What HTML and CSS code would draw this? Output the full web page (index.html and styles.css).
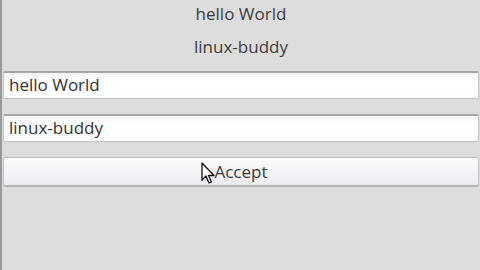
FILE: index.html
```html
<!DOCTYPE html>
<html>
<head>
<meta charset="utf-8">
<link rel="stylesheet" href="styles.css">
</head>
<body>
<div class="window">
  <div class="label first">hello World</div>
  <div class="label second">linux-buddy</div>
  <div class="entry">hello World</div>
  <div class="entry">linux-buddy</div>
  <div class="button">Accept</div>
  <svg class="cursor" width="14" height="24" viewBox="0 0 14 24">
    <path d="M1 1 L1 18 L5 14 L8 21 L10.5 20 L7.5 13.5 L13 13.5 Z" fill="#fff" stroke="#111" stroke-width="1.3" stroke-linejoin="round"/>
  </svg>
</div>
</body>
</html>
```
FILE: styles.css
```css
html, body {
  margin: 0;
  padding: 0;
  width: 480px;
  height: 270px;
  overflow: hidden;
  background: #dcdcdc;
}
.window {
  position: relative;
  box-sizing: border-box;
  height: 270px;
  border-left: 2px solid #9a9a9a;
  padding: 0 1px 0 1px;
  display: flex;
  flex-direction: column;
  font-family: "Open Sans", "DejaVu Sans", sans-serif;
  color: #3c3c3c;
}
.label {
  height: 28px;
  line-height: 28px;
  text-align: center;
  font-size: 17px;
}
.label.second {
  margin-top: 5px;
  margin-bottom: 10px;
}
.entry {
  box-sizing: border-box;
  height: 28px;
  line-height: 24px;
  margin-bottom: 15px;
  padding-left: 5px;
  font-size: 17px;
  color: #333;
  background: linear-gradient(#f4f4f4, #ffffff 30%, #fdfdfd);
  border: 1px solid #c4c4c4;
  border-top: 2px solid #a8a8a8;
  border-radius: 2px;
}
.button {
  box-sizing: border-box;
  height: 30px;
  line-height: 27px;
  text-align: center;
  font-size: 17px;
  color: #3a3a3a;
  background: linear-gradient(#fbfbfb, #f3f3f5 60%, #ebebee);
  border: 1px solid #c2c2c2;
  border-bottom: 2px solid #b4b4b4;
  border-radius: 3px;
}
.cursor {
  position: absolute;
  left: 199px;
  top: 162px;
}
```
